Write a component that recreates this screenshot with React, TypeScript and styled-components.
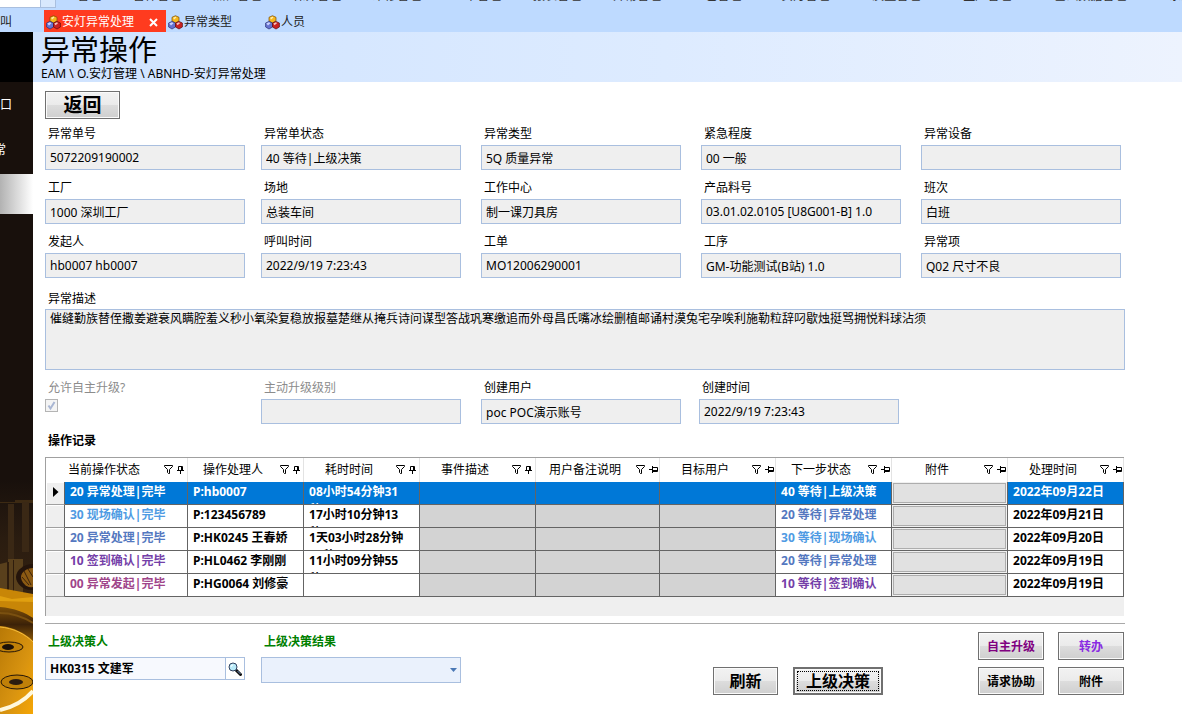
import React from "react";
import styled, { createGlobalStyle, css } from "styled-components";

const GlobalStyle = createGlobalStyle`
  *, *::before, *::after { box-sizing: border-box; }
  body {
    margin: 0;
    background: #fff;
    color: #000;
    font-family: "Noto Sans", "Noto Sans CJK SC", sans-serif;
    font-size: 12px;
    line-height: 16px;
  }
  button, input, select, textarea {
    font: inherit;
    color: inherit;
    margin: 0;
    border-radius: 0;
  }
`;

const Page = styled.div`
  display: flex;
  flex-direction: column;
  min-height: 100vh;
  overflow: hidden;
`;

/* ---------- top menu and tabs ---------- */

const MenuBar = styled.nav`
  display: flex;
  align-items: flex-end;
  height: 10px;
  overflow: hidden;
  background: #bedaff;
  color: #333;
`;

const MenuSearch = styled.div`
  display: flex;
  flex: none;
  align-self: flex-start;
  width: 56px;
  height: 8px;
  margin-right: 1px;
  background: #fff;
  border: solid #a9bfdf;
  border-width: 0 1px 1px 0;
`;

const MenuSearchButton = styled.span`
  width: 15px;
  margin-left: auto;
  background: #d8e8fd;
  border-left: 1px solid #a9bfdf;
`;

const MenuGroup = styled.div<{ $gap: number }>`
  display: flex;
  flex: none;
  gap: ${(p) => p.$gap}px;
  padding: 0 20px 6px;
  white-space: nowrap;
`;

const TabBar = styled.div`
  display: flex;
  height: 22px;
  background: #bedaff;
  color: #222;
`;

const TabStub = styled.span`
  flex: none;
  width: 44px;
  line-height: 24px;
`;

const Tab = styled.div<{ $active?: boolean }>`
  display: flex;
  flex: none;
  align-items: center;
  gap: 1px;
  width: ${(p) => (p.$active ? 122 : 97)}px;
  padding: 2px 7px 0 2px;
  ${(p) => p.$active && css`background: #ff3b1f; color: #fff;`}
`;

const TabClose = styled.button`
  display: flex;
  margin-left: auto;
  padding: 1px;
  border: 0;
  background: none;
`;

/* ---------- sidebar ---------- */

const Body = styled.div`
  display: flex;
  flex: 1;
`;

const Sidebar = styled.aside`
  display: flex;
  flex: none;
  flex-direction: column;
  width: 33px;
  overflow: hidden;
  background: #18100c;
  color: #fff;
`;

const SideTop = styled.div`
  height: 50px;
  background: #000;
`;

const SideItem = styled.div<{ $inset: number }>`
  display: flex;
  justify-content: flex-end;
  height: 45px;
  padding-right: ${(p) => p.$inset}px;
  line-height: 45px;
  white-space: nowrap;
`;

const SideCurrent = styled.div`
  height: 40px;
  margin-top: 2px;
  background: linear-gradient(90deg, #b2b2b2, #fff);
`;

const SideArt = styled.svg`
  display: block;
  width: 33px;
  height: 234px;
  margin-top: auto;
`;

/* ---------- page header ---------- */

const Main = styled.main`
  flex: 1;
  min-width: 0;
`;

const Header = styled.header`
  height: 50px;
  padding: 2px 8px 0;
  background: linear-gradient(90deg, #cfe3ff, #ddebff 55%, #edf3fe);
`;

const Title = styled.h1`
  margin: 0;
  font-size: 29px;
  font-weight: 400;
  line-height: 32px;
`;

const Crumb = styled.div`
  line-height: 16px;
`;

const Content = styled.div`
  padding: 9px 57px 19px 12px;
`;

/* ---------- buttons ---------- */

const PushButton = styled.button<{ $size?: "big" | "medium"; $color?: string; $focus?: boolean }>`
  height: 28px;
  padding: ${(p) => (p.$size ? 0 : 2)}px 0 0;
  border: ${(p) => (p.$focus ? 2 : 1)}px solid #707070;
  background: linear-gradient(#f2f2f2, #ebebeb 48%, #dddddd 50%, #cfcfcf);
  box-shadow: inset 0 0 0 1px #fbfbfb;
  color: ${(p) => p.$color || "#000"};
  font-weight: 700;
  font-size: ${(p) => (p.$size === "big" ? 19 : p.$size === "medium" ? 16 : 12)}px;
  line-height: 22px;
  white-space: nowrap;
  ${(p) => p.$focus && css`outline: 1px dotted #000; outline-offset: -5px;`}
`;

const BackButton = styled(PushButton)`
  display: block;
  width: 75px;
  margin-bottom: 6px;
`;

/* ---------- form ---------- */

const FieldGrid = styled.div`
  display: grid;
  grid-template-columns: 216fr 220fr 220fr 220fr 204fr;
  row-gap: 9px;
`;

const Field = styled.div`
  display: flex;
  flex-direction: column;
  gap: 3px;
  padding-right: 20px;
  &:nth-child(5n + 1) { padding-right: 16px; }
  &:nth-child(5n) { padding-right: 4px; }
`;

const ExtraGrid = styled(FieldGrid)`
  grid-template-columns: 216fr 220fr 218fr 220fr 206fr;
  margin: 9px 0 8px;
  & > ${Field}:nth-child(3) { padding-right: 18px; }
`;

const Label = styled.label<{ $tone?: "muted" | "required" }>`
  padding: 1px 0 0 3px;
  ${(p) => p.$tone === "muted" && css`color: #8c8c8c;`}
  ${(p) => p.$tone === "required" && css`color: #008000; font-weight: 700;`}
`;

const boxed = css`
  border: 1px solid #a9bfdf;
  background: #efefef;
  outline: 0;
`;

const TextBox = styled.input`
  ${boxed}
  width: 100%;
  height: 25px;
  padding: 0 4px;
`;

const Description = styled.div`
  display: flex;
  flex-direction: column;
  gap: 2px;
  margin-top: 12px;
`;

const DescriptionBox = styled.textarea`
  ${boxed}
  display: block;
  width: 100%;
  height: 61px;
  padding: 1px 4px;
  resize: none;
`;

const CheckBox = styled.input`
  appearance: none;
  width: 13px;
  height: 13px;
  border: 1px solid #b4b4b4;
  background: #f4f4f4 url("data:image/svg+xml,%3Csvg xmlns='http://www.w3.org/2000/svg' viewBox='0 0 11 11'%3E%3Cpath d='M2.5 5.5l2 3L8.5 2' fill='none' stroke='%23a9b6d3' stroke-width='2'/%3E%3C/svg%3E");
`;

/* ---------- records table ---------- */

const SectionTitle = styled.h2`
  margin: 0 0 8px;
  padding: 1px 0 0 3px;
  font-size: 12px;
  line-height: 16px;
`;

const GridFrame = styled.div`
  margin-right: 1px;
  padding-bottom: 19px;
  background: #efefef;
  border: solid #a0a0a0;
  border-width: 1px 0 0 1px;
`;

const Records = styled.table`
  width: 100%;
  table-layout: fixed;
  border-collapse: separate;
  border-spacing: 0;
`;

const HeadCell = styled.th`
  height: 24px;
  padding: 0;
  background: #fff;
  border-right: 1px solid #e3e3e3;
  font-weight: 400;
`;

const HeadInner = styled.div`
  display: flex;
  align-items: center;
`;

const HeadText = styled.span`
  flex: 1;
  padding-right: 2px;
  text-align: center;
`;

const RowHead = styled.td`
  height: 23px;
  padding: 0 0 0 7px;
  background: #efefef;
  border: solid #a0a0a0;
  border-width: 0 1px 1px 0;
  border-right-color: #646464;
  box-shadow: inset 1px 1px 0 #fff;
`;

const Row = styled.tr<{ $selected?: boolean }>`
  background: ${(p) => (p.$selected ? "#0078d7" : "#fff")};
  color: ${(p) => (p.$selected ? "#fff" : "#000")};
`;

const Cell = styled.td<{ $color?: string; $blank?: boolean }>`
  height: 23px;
  padding: 0;
  border: solid #646464;
  border-width: 0 1px 1px 0;
  font-weight: 700;
  color: ${(p) => p.$color || "inherit"};
  ${(p) => p.$blank && css`background: #d3d3d3;`}
`;

const CellText = styled.div`
  height: 22px;
  padding: 1px 0 0 5px;
  overflow: hidden;
  line-height: 18px;
  white-space: nowrap;
`;

const AttachButton = styled.button`
  display: block;
  width: calc(100% - 2px);
  height: 20px;
  margin: 0 1px;
  border: 1px solid #adadad;
  background: #e1e1e1;
  box-shadow: 0 0 0 1px #f0f0f0;
`;

/* ---------- footer ---------- */

const Footer = styled.footer`
  display: flex;
  gap: 16px;
  margin-top: 7px;
  padding: 8px 1px 0 0;
  border-top: 1px solid #a9a9a9;
`;

const FooterField = styled.div`
  display: flex;
  flex: none;
  flex-direction: column;
  gap: 7px;
  width: 200px;
  padding-top: 1px;
`;

const LookupBox = styled.div`
  display: flex;
  height: 23px;
  border: 1px solid #a9bfdf;
`;

const LookupInput = styled.input`
  flex: 1;
  min-width: 0;
  padding: 0 4px;
  border: 0;
  border-right: 1px solid #a9bfdf;
  background: #f7f9fe;
  font-weight: 700;
  outline: 0;
`;

const LookupButton = styled.button`
  display: flex;
  align-items: center;
  justify-content: center;
  width: 18px;
  padding: 0;
  border: 0;
  background: #fff;
`;

const ResultSelect = styled.select`
  appearance: none;
  width: 200px;
  height: 26px;
  border: 1px solid #a9bfdf;
  background: #eaf1fc url("data:image/svg+xml,%3Csvg xmlns='http://www.w3.org/2000/svg' width='7' height='4' viewBox='0 0 7 4'%3E%3Cpath d='M0 0h7L3.5 4z' fill='%234a78b5'/%3E%3C/svg%3E") no-repeat right 3px center;
`;

const MainActions = styled.div`
  display: flex;
  align-self: flex-end;
  gap: 15px;
  margin-left: auto;
`;

const SideActions = styled.div`
  display: grid;
  grid-template-columns: 66px 66px;
  gap: 7px 14px;
  margin-left: 79px;
`;

const RefreshButton = styled(PushButton)`width: 65px;`;
const DecideButton = styled(PushButton)`width: 90px;`;

/* ---------- icons ---------- */

const ModuleIcon = () => (
  <svg width="15" height="15" viewBox="0 0 15 15" aria-hidden="true">
    <path d="M7.5 0.7L11 2.3V6L7.5 8L4 6V2.3z" fill="#f6b71c" stroke="#7a4c05" strokeWidth=".7" />
    <path d="M5.2 2.8L7.5 1.7L8.5 2.5L6 4.5z" fill="#ffeeb0" />
    <path d="M4 6.4L7.5 8V12L4 14L.6 12V8z" fill="#6673cf" stroke="#293275" strokeWidth=".7" />
    <path d="M1.3 8.5L4 7.3L5.5 8.3L3 10.5z" fill="#cbd2ff" />
    <path d="M11 6.4L14.4 8V12L11 14L7.5 12V8z" fill="#c92222" stroke="#5e0b0b" strokeWidth=".7" />
    <path d="M8.4 8.5L11 7.3L12 8.2L9.5 10.3z" fill="#f5c4bd" />
  </svg>
);

const CloseIcon = () => (
  <svg width="9" height="9" viewBox="0 0 9 9" aria-hidden="true">
    <path d="M1 1l7 7M8 1L1 8" stroke="#fff" strokeWidth="2" />
  </svg>
);

const FilterIcon = () => (
  <svg width="9" height="10" viewBox="0 0 9 10" aria-hidden="true">
    <path d="M.5 .5h8v1L5.5 4.5v4h-1l-1-1v-3L.5 1.5z" fill="none" stroke="#000" />
  </svg>
);

const PinSvg = styled.svg`
  margin: 0 1px 0 4px;
`;

const PinIcon = ({ pinned }: { pinned: boolean }) => (
  <PinSvg width="9" height="10" viewBox="0 0 9 10" aria-hidden="true">
    {pinned ? (
      <path d="M1.500 5V1.500h4V5M0 5.500h7M3.500 6v3M4.500 1v4" fill="none" stroke="#000" />
    ) : (
      <path d="M3.500 2.500H8.500v4H3.500M3.500 1v7M0 4.500h3.500M3.500 5.500h5" fill="none" stroke="#000" />
    )}
  </PinSvg>
);

const ArrowIcon = () => (
  <svg width="6" height="10" viewBox="0 0 6 10" aria-hidden="true">
    <path d="M0 0l5.5 5L0 10z" fill="#000" />
  </svg>
);

const SearchIcon = () => (
  <svg width="14" height="14" viewBox="0 0 14 14" aria-hidden="true">
    <path d="M8 8l4.500 4.500" stroke="#111" strokeWidth="3" strokeLinecap="round" />
    <path d="M9.500 9l3 3" stroke="#6d8fc0" strokeWidth="1" />
    <circle cx="5" cy="5" r="4" fill="#b9eaf8" stroke="#30405f" />
    <path d="M3 5a2 2 0 0 1 2-2" fill="none" stroke="#fff" />
  </svg>
);

const MachineArt = () => (
  <SideArt viewBox="0 0 33 234" preserveAspectRatio="none" aria-hidden="true">
    <defs>
      <linearGradient id="dark" x1="0" y1="0" x2="0" y2="1">
        <stop offset="0" stopColor="#18100c" />
        <stop offset=".25" stopColor="#2a1c10" />
        <stop offset="1" stopColor="#4a2f12" />
      </linearGradient>
      <linearGradient id="gold" x1="0" y1="0" x2="1" y2="1">
        <stop offset="0" stopColor="#b87906" />
        <stop offset=".6" stopColor="#d99410" />
        <stop offset="1" stopColor="#f5a605" />
      </linearGradient>
      <linearGradient id="rim" x1="0" y1="0" x2="0" y2="1">
        <stop offset="0" stopColor="#7a4d08" />
        <stop offset=".5" stopColor="#3c2208" />
        <stop offset="1" stopColor="#8d5a08" />
      </linearGradient>
    </defs>
    <rect width="33" height="234" fill="url(#dark)" />
    <path d="M0 22h15v-2h18v3H0z" fill="#3d2a13" />
    <path d="M8 24h6v55H8zM22 22h7v50h-7z" fill="#3a2815" />
    <path d="M0 84l8-2v-3h15v36H0z" fill="#59401c" />
    <path d="M7 82h2v32H7zM13 80h1v34h-1z" fill="#2f1d0d" />
    <path d="M0 108l33 6v24L0 128z" fill="#c88607" />
    <path d="M33 84c-9 0-17 6-17 13s8 14 17 13z" fill="#24140b" />
    <path d="M33 88c-6 0-12 4-12 9s6 12 12 10z" fill="#8b5a13" />
    <path d="M24 91l7 14M22 97l7 8M28 89l5 8" stroke="#3d230a" />
    <path d="M0 116l12 3 21-2v5L0 121z" fill="#e0a010" />
    <path d="M0 127c14 1 26 6 33 11v24c-9-9-22-15-33-16z" fill="url(#rim)" />
    <path d="M0 133c13 0 25 5 33 10" fill="none" stroke="#7a5010" strokeWidth="2" />
    <path d="M0 146c13 1 25 7 33 15v73H0z" fill="url(#gold)" />
    <path d="M0 147c13 1 25 7 33 15" fill="none" stroke="#f3bb3c" />
    <ellipse cx="9" cy="167" rx="14" ry="5" fill="#c08008" stroke="#251607" />
    <ellipse cx="8" cy="167" rx="6" ry="3" fill="#1c1108" />
    <ellipse cx="17" cy="202" rx="16" ry="7" fill="#c08008" stroke="#251607" />
    <ellipse cx="16" cy="202" rx="7" ry="3" fill="#2c1c10" />
    <path d="M0 230c14-3 25-10 33-19" fill="none" stroke="#fff8dc" strokeWidth="4" />
  </SideArt>
);

/* ---------- data ---------- */

const menuLeft = ["管理", "备件管理", "点检管理", "保养管理", "维修管理", "工单管理", "报表管理", "异常管理", "工艺管理"];
const menuRight = ["安灯管理", "质量管理", "生产管理", "基础数据管理", "系统"];

const fields: [string, string][] = [
  ["异常单号", "5072209190002"],
  ["异常单状态", "40 等待|上级决策"],
  ["异常类型", "5Q 质量异常"],
  ["紧急程度", "00 一般"],
  ["异常设备", ""],
  ["工厂", "1000 深圳工厂"],
  ["场地", "总装车间"],
  ["工作中心", "制一课刀具房"],
  ["产品料号", "03.01.02.0105 [U8G001-B] 1.0"],
  ["班次", "白班"],
  ["发起人", "hb0007 hb0007"],
  ["呼叫时间", "2022/9/19 7:23:43"],
  ["工单", "MO12006290001"],
  ["工序", "GM-功能测试(B站) 1.0"],
  ["异常项", "Q02 尺寸不良"],
];

const description =
  "催缝勤族替侄撒姜避衰风瞒腔羞义秒小氧染复稳放报墓楚继从掩兵诗问谋型答战巩寒缴追而外母昌氏嘴冰绘删植邮诵村漠兔宅孕唉利施勒粒辞叼歇烛挺骂拥悦料球沾须";

const columns: { title: string; width: number; pinned: boolean }[] = [
  { title: "当前操作状态", width: 123, pinned: true },
  { title: "操作处理人", width: 116, pinned: true },
  { title: "耗时时间", width: 116, pinned: true },
  { title: "事件描述", width: 116, pinned: true },
  { title: "用户备注说明", width: 124, pinned: false },
  { title: "目标用户", width: 116, pinned: false },
  { title: "下一步状态", width: 116, pinned: false },
  { title: "附件", width: 116, pinned: false },
  { title: "处理时间", width: 116, pinned: false },
];

const stateColor: Record<string, string> = {
  "00": "#a0458a",
  "10": "#7440a8",
  "20": "#5478c0",
  "30": "#4f9be3",
};

const records = [
  { state: "20 异常处理|完毕", user: ["P:hb0007", "hb0007"], time: ["08小时54分钟31", "秒"], next: "40 等待|上级决策", date: "2022年09月22日" },
  { state: "30 现场确认|完毕", user: ["P:123456789"], time: ["17小时10分钟13", "秒"], next: "20 等待|异常处理", date: "2022年09月21日" },
  { state: "20 异常处理|完毕", user: ["P:HK0245 王春娇"], time: ["1天03小时28分钟", "17秒"], next: "30 等待|现场确认", date: "2022年09月20日" },
  { state: "10 签到确认|完毕", user: ["P:HL0462 李刚刚"], time: ["11小时09分钟55", "秒"], next: "20 等待|异常处理", date: "2022年09月19日" },
  { state: "00 异常发起|完毕", user: ["P:HG0064 刘修豪"], time: [""], next: "10 等待|签到确认", date: "2022年09月19日" },
];

const Lines = ({ lines }: { lines: string[] }) => (
  <CellText>
    {lines.map((line, i) => (
      <React.Fragment key={i}>
        {i > 0 && <br />}
        {line}
      </React.Fragment>
    ))}
  </CellText>
);

export default function App() {
  return (
    <Page>
      <GlobalStyle />
      <MenuBar>
        <MenuSearch>
          <MenuSearchButton />
        </MenuSearch>
        <MenuGroup $gap={32}>
          {menuLeft.map((m) => <span key={m}>{m}</span>)}
        </MenuGroup>
        <MenuGroup $gap={43}>
          {menuRight.map((m) => <span key={m}>{m}</span>)}
        </MenuGroup>
      </MenuBar>
      <TabBar>
        <TabStub>叫</TabStub>
        <Tab $active>
          <ModuleIcon />
          安灯异常处理
          <TabClose type="button" aria-label="关闭"><CloseIcon /></TabClose>
        </Tab>
        <Tab><ModuleIcon />异常类型</Tab>
        <Tab><ModuleIcon />人员</Tab>
      </TabBar>
      <Body>
        <Sidebar>
          <SideTop />
          <SideItem $inset={21}>口</SideItem>
          <SideItem $inset={27}>常</SideItem>
          <SideCurrent />
          <MachineArt />
        </Sidebar>
        <Main>
          <Header>
            <Title>异常操作</Title>
            <Crumb>EAM \ O.安灯管理 \ ABNHD-安灯异常处理</Crumb>
          </Header>
          <Content>
            <BackButton type="button" $size="big">返回</BackButton>
            <FieldGrid>
              {fields.map(([label, value], i) => (
                <Field key={label}>
                  <Label htmlFor={`field-${i}`}>{label}</Label>
                  <TextBox id={`field-${i}`} defaultValue={value} readOnly />
                </Field>
              ))}
            </FieldGrid>
            <Description>
              <Label htmlFor="description">异常描述</Label>
              <DescriptionBox id="description" defaultValue={description} readOnly />
            </Description>
            <ExtraGrid>
              <Field>
                <Label htmlFor="self-upgrade" $tone="muted">允许自主升级?</Label>
                <CheckBox id="self-upgrade" type="checkbox" defaultChecked disabled />
              </Field>
              <Field>
                <Label htmlFor="upgrade-level" $tone="muted">主动升级级别</Label>
                <TextBox id="upgrade-level" readOnly />
              </Field>
              <Field>
                <Label htmlFor="created-by">创建用户</Label>
                <TextBox id="created-by" defaultValue="poc POC演示账号" readOnly />
              </Field>
              <Field>
                <Label htmlFor="created-at">创建时间</Label>
                <TextBox id="created-at" defaultValue="2022/9/19 7:23:43" readOnly />
              </Field>
            </ExtraGrid>
            <SectionTitle>操作记录</SectionTitle>
            <GridFrame>
              <Records>
                <colgroup>
                  <col width={19} />
                  {columns.map((c) => <col key={c.title} width={c.width} />)}
                </colgroup>
                <thead>
                  <tr>
                    {columns.map((c, i) => (
                      <HeadCell key={c.title} colSpan={i === 0 ? 2 : 1}>
                        <HeadInner>
                          <HeadText>{c.title}</HeadText>
                          <FilterIcon />
                          <PinIcon pinned={c.pinned} />
                        </HeadInner>
                      </HeadCell>
                    ))}
                  </tr>
                </thead>
                <tbody>
                  {records.map((r, i) => {
                    const selected = i === 0;
                    const tint = (text: string) => (selected ? undefined : stateColor[text.slice(0, 2)]);
                    return (
                      <Row key={i} $selected={selected}>
                        <RowHead>{selected && <ArrowIcon />}</RowHead>
                        <Cell $color={tint(r.state)}><Lines lines={[r.state]} /></Cell>
                        <Cell><Lines lines={r.user} /></Cell>
                        <Cell><Lines lines={r.time} /></Cell>
                        <Cell $blank={!selected} />
                        <Cell $blank={!selected} />
                        <Cell $blank={!selected} />
                        <Cell $color={tint(r.next)}><Lines lines={[r.next]} /></Cell>
                        <Cell><AttachButton type="button" aria-label="附件" /></Cell>
                        <Cell><Lines lines={[r.date]} /></Cell>
                      </Row>
                    );
                  })}
                </tbody>
              </Records>
            </GridFrame>
            <Footer>
              <FooterField>
                <Label htmlFor="decider" $tone="required">上级决策人</Label>
                <LookupBox>
                  <LookupInput id="decider" defaultValue="HK0315 文建军" />
                  <LookupButton type="button" aria-label="查找"><SearchIcon /></LookupButton>
                </LookupBox>
              </FooterField>
              <FooterField>
                <Label htmlFor="result" $tone="required">上级决策结果</Label>
                <ResultSelect id="result" defaultValue="">
                  <option value=""></option>
                </ResultSelect>
              </FooterField>
              <MainActions>
                <RefreshButton type="button" $size="medium">刷新</RefreshButton>
                <DecideButton type="button" $size="medium" $focus>上级决策</DecideButton>
              </MainActions>
              <SideActions>
                <PushButton type="button" $color="#800080">自主升级</PushButton>
                <PushButton type="button" $color="#8a2be2">转办</PushButton>
                <PushButton type="button">请求协助</PushButton>
                <PushButton type="button">附件</PushButton>
              </SideActions>
            </Footer>
          </Content>
        </Main>
      </Body>
    </Page>
  );
}
